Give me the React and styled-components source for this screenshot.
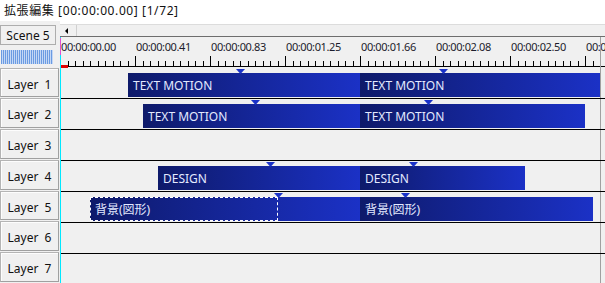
import styled, { createGlobalStyle } from "styled-components"

const GlobalStyle = createGlobalStyle`
  html, body {
    margin: 0;
    padding: 0;
    background: #f0f0f0;
    overflow: hidden;
    font-family: "Noto Sans", "Noto Sans CJK JP", sans-serif;
  }
`

// timeline content starts right after the cyan playhead at x=60
const ORIGIN = 61

const layers = [
  {
    name: "Layer\u00a0\u00a01",
    clips: [
      { from: 128, to: 360, label: "TEXT MOTION" },
      { from: 360, to: 600, label: "TEXT MOTION" },
    ],
    markers: [240, 443],
  },
  {
    name: "Layer\u00a0\u00a02",
    clips: [
      { from: 143, to: 360, label: "TEXT MOTION" },
      { from: 360, to: 585, label: "TEXT MOTION" },
    ],
    markers: [255, 428],
  },
  { name: "Layer\u00a0\u00a03", clips: [], markers: [] },
  {
    name: "Layer\u00a0\u00a04",
    clips: [
      { from: 158, to: 360, label: "DESIGN" },
      { from: 360, to: 525, label: "DESIGN" },
    ],
    markers: [270, 413],
  },
  {
    name: "Layer\u00a0\u00a05",
    clips: [
      { from: 90, to: 360, label: "背景(図形)", selectedTo: 278 },
      { from: 360, to: 593, label: "背景(図形)" },
    ],
    markers: [278, 405],
  },
  { name: "Layer\u00a0\u00a06", clips: [], markers: [] },
  { name: "Layer\u00a0\u00a07", clips: [], markers: [] },
]

const times = [
  "00:00:00.00",
  "00:00:00.41",
  "00:00:00.83",
  "00:00:01.25",
  "00:00:01.66",
  "00:00:02.08",
  "00:00:02.50",
  "00:00:02.91",
]

const Page = styled.div`
  width: 605px;
  height: 283px;
  display: flex;
  flex-direction: column;
  overflow: hidden;
`

const TitleBar = styled.div`
  height: 21px;
  flex-shrink: 0;
  background: #fff;
  padding-left: 4px;
  font-size: 12px;
  line-height: 22px;
  letter-spacing: 0.6px;
  color: #111;
  white-space: pre;
`

const Main = styled.div`
  flex: 1;
  display: flex;
  min-height: 0;
`

const LeftColumn = styled.div`
  width: 60px;
  flex-shrink: 0;
  display: flex;
  flex-direction: column;
`

const SceneBlock = styled.div`
  height: 47px;
  display: flex;
  flex-direction: column;
  padding-top: 4px;
  box-sizing: border-box;
`

const SceneButton = styled.div`
  width: 56px;
  height: 20px;
  box-sizing: border-box;
  border: 1px solid #adadad;
  background: #f0f0f0;
  font-size: 12px;
  line-height: 20px;
  text-align: center;
  color: #111;
`

const Meter = styled.div`
  margin: 5px 0 0 1px;
  width: 52px;
  height: 14px;
  background: repeating-linear-gradient(
    to right,
    #6b9be2 0 1px,
    #c4d8f5 1px 2px
  );
`

const LayerLabel = styled.div`
  width: 59px;
  height: 30px;
  margin-bottom: 1px;
  padding-top: 6px;
  box-sizing: border-box;
  border: 1px solid #b4b4b4;
  border-right-color: #a0a0a0;
  border-bottom-color: #a0a0a0;
  box-shadow: inset 1px 1px #fdfdfd;
  background: #f0f0f0;
  font-size: 12px;
  line-height: 20px;
  text-align: center;
  color: #111;
`

const RightColumn = styled.div`
  flex: 1;
  display: flex;
  flex-direction: column;
  min-width: 0;
`

const ScrollArea = styled.div`
  background: #fff;
  padding-top: 3px;
`

const ScrollBar = styled.div`
  height: 11px;
  border-top: 1px solid #dcdcdc;
  border-bottom: 1px solid #6d6d6d;
  background: #f0f0f0;
  display: flex;
`

const ArrowButton = styled.div`
  width: 15px;
  margin-left: 1px;
  border-right: 1px solid #d0d0d0;
  display: flex;
  align-items: center;
  justify-content: center;
  &::before {
    content: "";
    border-top: 3px solid transparent;
    border-bottom: 3px solid transparent;
    border-right: 3px solid #000;
    margin-right: 4px;
  }
`

const Timeline = styled.div`
  flex: 1;
  position: relative;
  border-left: 1px solid #00e8ff;
`

const PlayheadTop = styled.div`
  position: absolute;
  left: -1px;
  top: 1px;
  width: 1px;
  height: 17px;
  background: #e050d0;
`

const EndLine = styled.div`
  position: absolute;
  left: 539px;
  top: 0;
  bottom: 0;
  width: 1px;
  background: #a0a0a0;
`

const Ruler = styled.div`
  height: 31px;
  display: flex;
  flex-direction: column;
`

const RulerLabels = styled.div`
  height: 19px;
  display: flex;
  padding-top: 3px;
  box-sizing: border-box;
  overflow: hidden;
`

const TimeLabel = styled.span`
  width: 75px;
  flex-shrink: 0;
  font-size: 11px;
  line-height: 13px;
  letter-spacing: -0.4px;
  color: #1c1c2c;
  white-space: nowrap;
`

const Track = styled.div`
  height: 30px;
  position: relative;
  border-bottom: 1px solid #000;
`

const Clip = styled.div`
  position: absolute;
  top: 5px;
  height: 24px;
  background: linear-gradient(to right, #0e1a6a, #1b31c6);
  color: #e4eaff;
  font-size: 12px;
  line-height: 26px;
  padding-left: 5px;
  box-sizing: border-box;
  white-space: nowrap;
  overflow: hidden;
`

const Selection = styled.div`
  position: absolute;
  left: 0;
  top: 0;
  bottom: 0;
  box-sizing: border-box;
  border: 1px dashed #fff;
`

const Marker = styled.svg`
  position: absolute;
  top: 1px;
`

const RulerTicks = () => {
  const w = 544
  const ticks = []
  for (let j = 1; 60 + j * 7.5 < 605; j++) {
    const x = Math.round(60 + j * 7.5) - ORIGIN + 0.5
    const major = j % 10 === 0
    ticks.push(
      <line key={j} x1={x} x2={x} y1={major ? 0 : 5} y2={11} stroke="#000" strokeWidth="1" />
    )
  }
  return (
    <svg width={w} height="12" style={{ display: "block" }}>
      <line x1="0" x2={w} y1="10.5" y2="10.5" stroke="#000" strokeWidth="1" />
      {ticks}
      <rect x="0" y="9" width="7" height="3" fill="#e00000" />
    </svg>
  )
}

const App = () => {
  return (
    <Page>
      <GlobalStyle />
      <TitleBar>拡張編集 [00:00:00.00] [1/72]</TitleBar>
      <Main>
        <LeftColumn>
          <SceneBlock>
            <SceneButton>Scene 5</SceneButton>
            <Meter />
          </SceneBlock>
          {layers.map((l) => (
            <LayerLabel key={l.name}>{l.name}</LayerLabel>
          ))}
        </LeftColumn>
        <RightColumn>
          <ScrollArea>
            <ScrollBar>
              <ArrowButton />
            </ScrollBar>
          </ScrollArea>
          <Timeline>
            <EndLine />
            <PlayheadTop />
            <Ruler>
              <RulerLabels>
                {times.map((t) => (
                  <TimeLabel key={t}>{t}</TimeLabel>
                ))}
              </RulerLabels>
              <RulerTicks />
            </Ruler>
            {layers.map((l) => (
              <Track key={l.name}>
                {l.clips.map((c) => (
                  <Clip
                    key={c.from}
                    style={{ left: c.from - ORIGIN, width: c.to - c.from }}
                  >
                    {c.selectedTo && (
                      <Selection style={{ width: c.selectedTo - c.from }} />
                    )}
                    {c.label}
                  </Clip>
                ))}
                {l.markers.map((m) => (
                  <Marker
                    key={m}
                    width="9"
                    height="5"
                    style={{ left: m - ORIGIN - 4 }}
                  >
                    <polygon points="0,0 9,0 4.5,5" fill="#1a32c8" />
                  </Marker>
                ))}
              </Track>
            ))}
          </Timeline>
        </RightColumn>
      </Main>
    </Page>
  )
}

export default App
